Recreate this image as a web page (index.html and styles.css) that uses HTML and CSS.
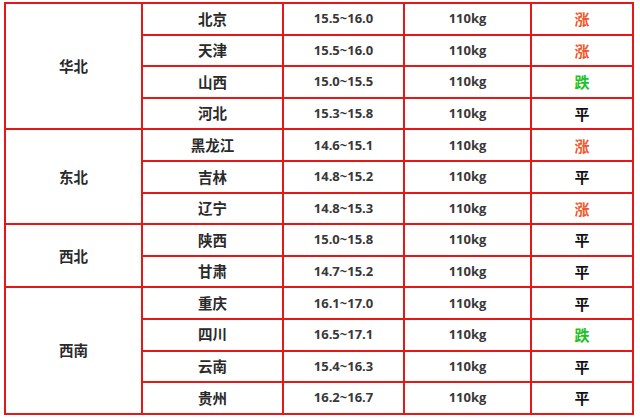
FILE: index.html
```
<!DOCTYPE html>
<html lang="zh">
<head>
<meta charset="utf-8">
<link rel="stylesheet" href="styles.css">
</head>
<body>
<table class="price">
  <colgroup>
    <col class="c1"><col class="c2"><col class="c3"><col class="c4"><col class="c5">
  </colgroup>
  <tbody>
    <tr><td class="region" rowspan="4">华北</td><td class="prov">北京</td><td class="num">15.5~16.0</td><td class="num">110kg</td><td class="trend up">涨</td></tr>
    <tr><td class="prov">天津</td><td class="num">15.5~16.0</td><td class="num">110kg</td><td class="trend up">涨</td></tr>
    <tr><td class="prov">山西</td><td class="num">15.0~15.5</td><td class="num">110kg</td><td class="trend down">跌</td></tr>
    <tr><td class="prov">河北</td><td class="num">15.3~15.8</td><td class="num">110kg</td><td class="trend flat">平</td></tr>
    <tr><td class="region" rowspan="3">东北</td><td class="prov">黑龙江</td><td class="num">14.6~15.1</td><td class="num">110kg</td><td class="trend up">涨</td></tr>
    <tr><td class="prov">吉林</td><td class="num">14.8~15.2</td><td class="num">110kg</td><td class="trend flat">平</td></tr>
    <tr><td class="prov">辽宁</td><td class="num">14.8~15.3</td><td class="num">110kg</td><td class="trend up">涨</td></tr>
    <tr><td class="region" rowspan="2">西北</td><td class="prov">陕西</td><td class="num">15.0~15.8</td><td class="num">110kg</td><td class="trend flat">平</td></tr>
    <tr><td class="prov">甘肃</td><td class="num">14.7~15.2</td><td class="num">110kg</td><td class="trend flat">平</td></tr>
    <tr><td class="region" rowspan="4">西南</td><td class="prov">重庆</td><td class="num">16.1~17.0</td><td class="num">110kg</td><td class="trend flat">平</td></tr>
    <tr><td class="prov">四川</td><td class="num">16.5~17.1</td><td class="num">110kg</td><td class="trend down">跌</td></tr>
    <tr><td class="prov">云南</td><td class="num">15.4~16.3</td><td class="num">110kg</td><td class="trend flat">平</td></tr>
    <tr><td class="prov">贵州</td><td class="num">16.2~16.7</td><td class="num">110kg</td><td class="trend flat">平</td></tr>
  </tbody>
</table>
</body>
</html>
```
FILE: styles.css
```
html, body {
  margin: 0;
  padding: 0;
  background: #ffffff;
}
body {
  padding: 2px 0 0 4px;
  font-family: "Noto Sans CJK SC", "Noto Sans", sans-serif;
  font-weight: 700;
  color: #333333;
}
.price {
  border-collapse: collapse;
  table-layout: fixed;
  width: 630px;
}
.c1 { width: 137px; }
.c2 { width: 141px; }
.c3 { width: 121px; }
.c4 { width: 127px; }
.c5 { width: 102px; }
.price td {
  border: 2px solid #e61717;
  height: 29.6px;
  padding: 0;
  text-align: center;
  vertical-align: middle;
  line-height: 1;
}
.region, .prov {
  font-size: 14.5px;
  color: #2a2a2a;
}
.num {
  font-size: 13px;
  color: #383838;
  font-family: "Open Sans", "Noto Sans", sans-serif;
}
.trend {
  font-size: 15px;
}
.up { color: #f2582a; }
.down { color: #1fc21f; }
.flat { color: #111111; }
```
